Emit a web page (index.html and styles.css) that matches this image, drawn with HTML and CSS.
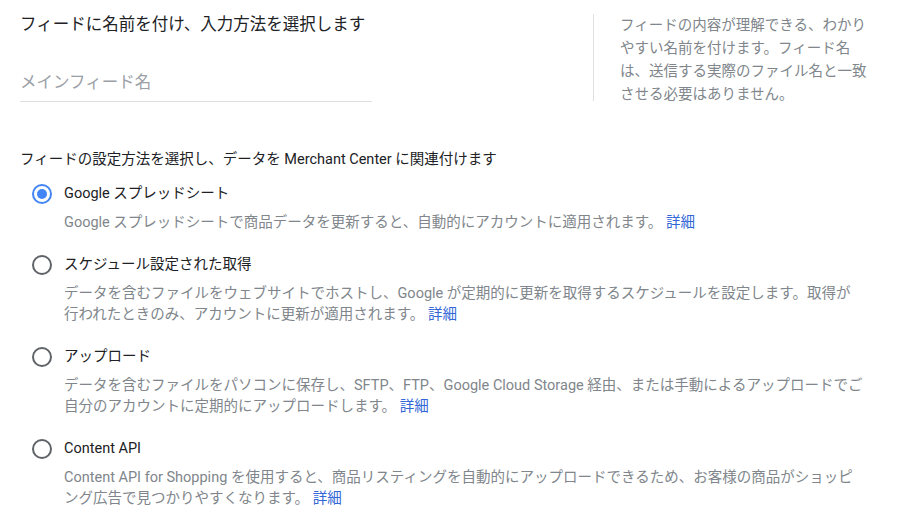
FILE: index.html
```html
<!DOCTYPE html>
<html lang="ja">
<head>
  <meta charset="UTF-8">
  <title>フィードの作成</title>
  <link rel="stylesheet" href="styles.css">
</head>
<body>
<div class="feed">
  <div class="feed__name">
    <div class="feed__main">
      <h2 class="feed__title">フィードに名前を付け、入力方法を選択します</h2>
      <input type="text" class="feed__input" placeholder="メインフィード名">
    </div>
    <div class="feed__help">
      <p>フィードの内容が理解できる、わかりやすい名前を付けます。フィード名は、送信する実際のファイル名と一致させる必要はありません。</p>
    </div>
  </div>

  <div class="method">
    <p class="method__title">フィードの設定方法を選択し、データを Merchant Center に関連付けます</p>

    <label class="option">
      <input type="radio" name="method" checked>
      <span class="option__radio"></span>
      <span class="option__label">Google スプレッドシート</span>
      <span class="option__desc">Google スプレッドシートで商品データを更新すると、自動的にアカウントに適用されます。 <a href="#">詳細</a></span>
    </label>

    <label class="option">
      <input type="radio" name="method">
      <span class="option__radio"></span>
      <span class="option__label">スケジュール設定された取得</span>
      <span class="option__desc">データを含むファイルをウェブサイトでホストし、Google が定期的に更新を取得するスケジュールを設定します。取得が<br>行われたときのみ、アカウントに更新が適用されます。 <a href="#">詳細</a></span>
    </label>

    <label class="option">
      <input type="radio" name="method">
      <span class="option__radio"></span>
      <span class="option__label">アップロード</span>
      <span class="option__desc">データを含むファイルをパソコンに保存し、SFTP、FTP、Google Cloud Storage 経由、または手動によるアップロードでご<br>自分のアカウントに定期的にアップロードします。 <a href="#">詳細</a></span>
    </label>

    <label class="option">
      <input type="radio" name="method">
      <span class="option__radio"></span>
      <span class="option__label">Content API</span>
      <span class="option__desc">Content API for Shopping を使用すると、商品リスティングを自動的にアップロードできるため、お客様の商品がショッピ<br>ング広告で見つかりやすくなります。 <a href="#">詳細</a></span>
    </label>
  </div>
</div>
</body>
</html>
```

FILE: styles.css
```css
body {
  margin: 0;
  font-family: Roboto, 'Noto Sans CJK JP', sans-serif;
  color: #202124;
  background: #fff;
}
.feed {
  padding: 13px 20px 0 20px;
}
.feed__name {
  display: flex;
  align-items: flex-start;
}
.feed__main {
  width: 352px;
}
.feed__title {
  margin: 0;
  font-size: 16.5px;
  font-weight: normal;
  line-height: 24px;
}
.feed__input {
  display: block;
  width: 100%;
  box-sizing: border-box;
  margin-top: 27px;
  height: 38px;
  padding: 0;
  border: 0;
  border-bottom: 1px solid #e0e0e0;
  outline: none;
  font-family: inherit;
  font-size: 16.5px;
  color: #202124;
}
.feed__input::placeholder {
  color: #9aa0a6;
}
.feed__help {
  margin-left: 221px;
  margin-top: 1px;
  padding-left: 26px;
  border-left: 1px solid #e0e0e0;
  height: 87px;
}
.feed__help p {
  margin: 0;
  width: 250px;
  font-size: 14.5px;
  line-height: 23px;
  color: #80868b;
}
.method {
  margin-top: 48px;
}
.method__title {
  margin: 0 0 12px 0;
  font-size: 14.5px;
  line-height: 20px;
}
.option {
  display: grid;
  grid-template-columns: 20px 1fr;
  column-gap: 12px;
  padding-left: 12px;
  margin-bottom: 20px;
  cursor: pointer;
}
.option input {
  display: none;
}
.option__radio {
  grid-row: 1;
  grid-column: 1;
  align-self: center;
  width: 20px;
  height: 20px;
  box-sizing: border-box;
  border: 2px solid #5f6368;
  border-radius: 50%;
  position: relative;
}
.option input:checked + .option__radio {
  border-color: #4285f4;
}
.option input:checked + .option__radio::after {
  content: '';
  position: absolute;
  left: 3px;
  top: 3px;
  width: 10px;
  height: 10px;
  border-radius: 50%;
  background: #4285f4;
}
.option__label {
  grid-row: 1;
  grid-column: 2;
  font-size: 14.5px;
  line-height: 24px;
}
.option__desc {
  grid-row: 2;
  grid-column: 2;
  margin-top: 6px;
  max-width: 820px;
  font-size: 14.5px;
  line-height: 21px;
  color: #80868b;
}
.option__desc a {
  color: #3367d6;
  text-decoration: none;
}
```
